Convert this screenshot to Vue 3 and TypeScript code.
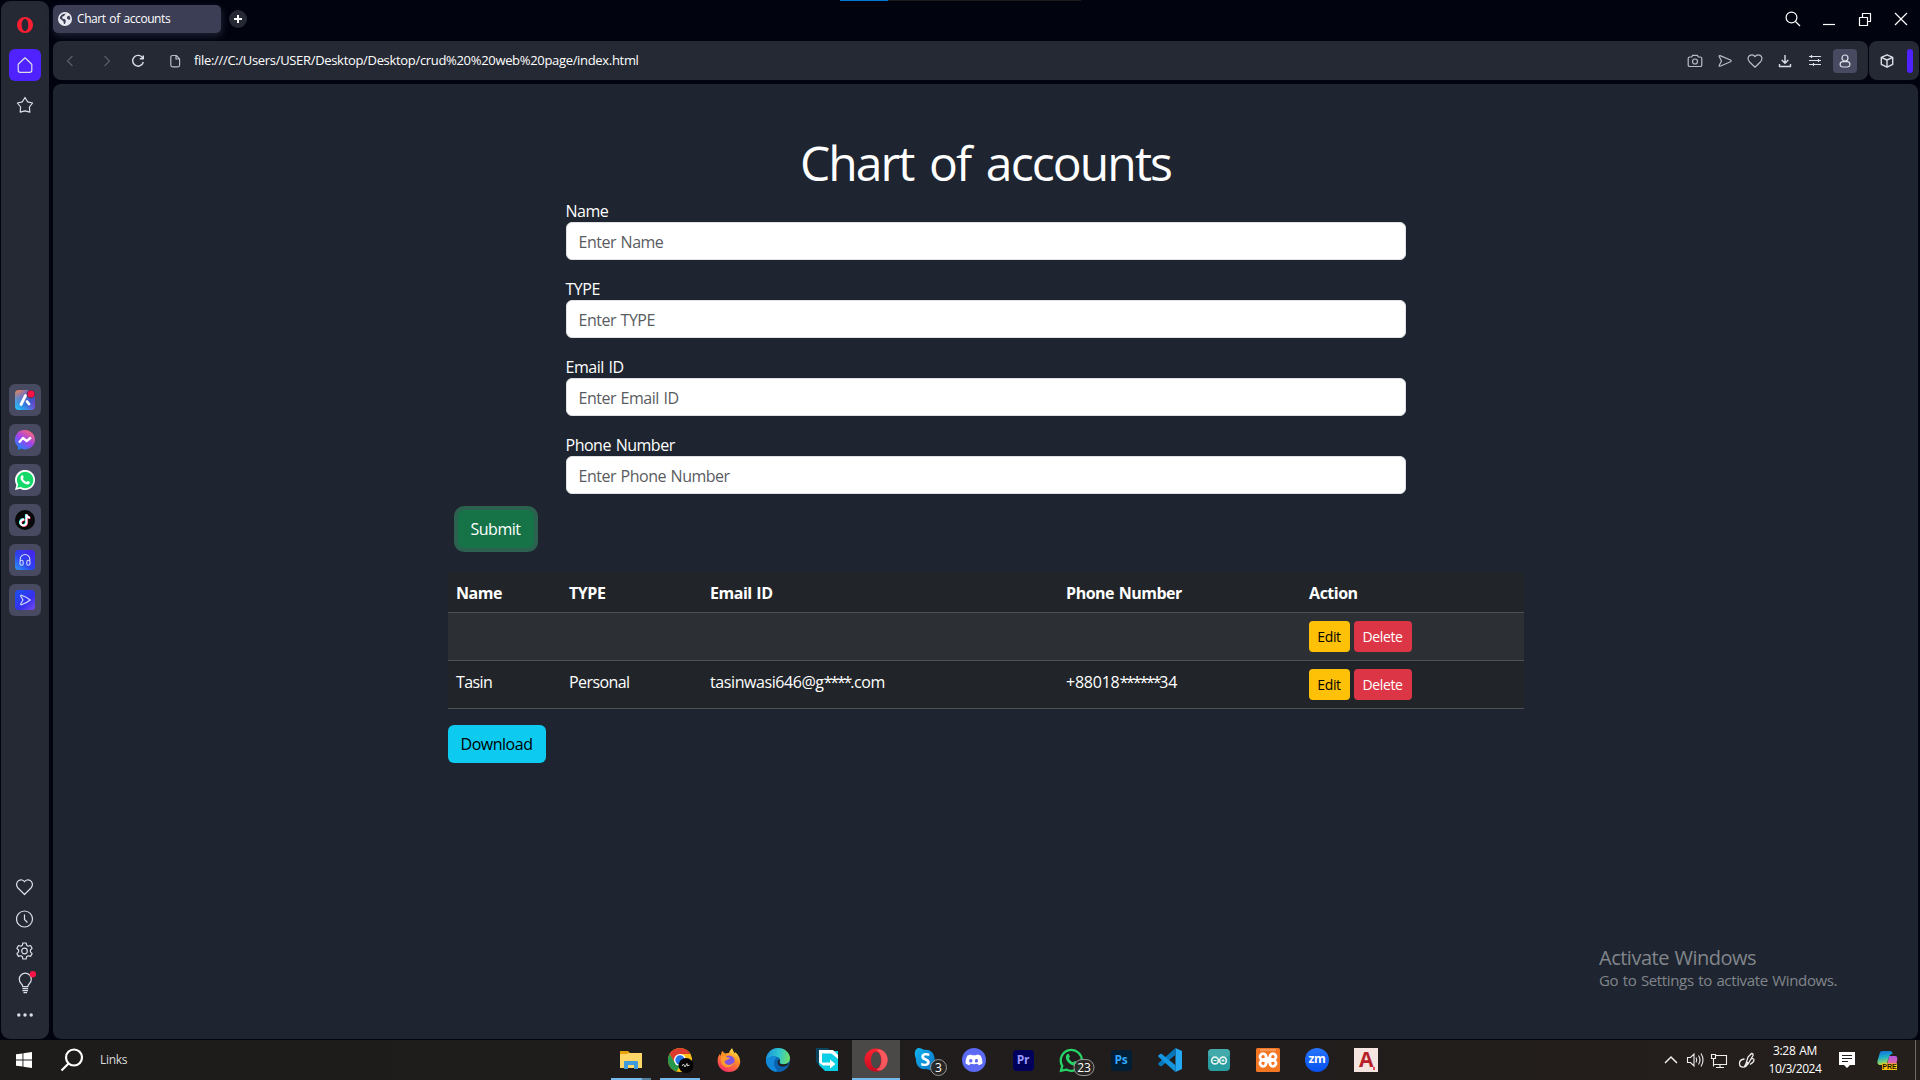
<script setup lang="ts">
import { reactive, ref } from 'vue'

interface Field { id: string; label: string }
interface Account { name: string; type: string; mail: string[]; phone: string[] }

const fields: Field[] = [
  { id: 'name', label: 'Name' },
  { id: 'type', label: 'TYPE' },
  { id: 'email', label: 'Email ID' },
  { id: 'phone', label: 'Phone Number' },
]
const form = reactive<Record<string, string>>({ name: '', type: '', email: '', phone: '' })
const columns: string[] = ['Name', 'TYPE', 'Email ID', 'Phone Number', 'Action']
const accounts = ref<Account[]>([
  { name: '', type: '', mail: ['', '', ''], phone: ['', '', ''] },
  { name: 'Tasin', type: 'Personal', mail: ['tasinwasi646@g', '****', '.com'], phone: ['+88018', '******', '34'] },
])
function remove(index: number) {
  accounts.value.splice(index, 1)
}
</script>

<template>
  <div class="desktop">
    <div class="browser">
      <div class="screen-accent"><i></i></div>

      <aside class="sidebar">
        <div class="cell">
          <svg width="18" height="18" viewBox="0 0 18 18"><path fill="#fa1e32" fill-rule="evenodd" d="M9 1a8 8 0 1 0 0 16A8 8 0 0 0 9 1Zm0 2c2 0 3.300 2.600 3.300 6S11 15 9 15s-3.300-2.600-3.300-6S7 3 9 3Z" /></svg>
        </div>
        <div class="cell home">
          <svg width="18" height="18" viewBox="0 0 18 18" class="ln"><path d="M2.200 8.200 9 1.800l6.800 6.400M2.200 8v6.300q0 2 2 2h9.600q2 0 2-2V8" /></svg>
        </div>
        <div class="cell">
          <svg width="18" height="18" viewBox="0 0 18 18" class="ln"><path d="m9 1.500 2.600 4.300 5 1.200-3.200 4 .4 5.200L9 14.900l-4.800 1.300.4-5.200-3.200-4 5-1.200Z" /></svg>
        </div>

        <div class="apps">
          <div class="cell app">
            <svg width="20" height="20" viewBox="0 0 20 20"><defs><linearGradient id="aria" x1="0" y1="0" x2=".9" y2="1"><stop offset="0" stop-color="#ff8a4c" /><stop offset=".35" stop-color="#7d6fb5" /><stop offset=".65" stop-color="#3757c8" /><stop offset="1" stop-color="#8b35c8" /></linearGradient><linearGradient id="ariaTeal" y1=".3" y2="1" x1=".5" x2="0"><stop offset="0" stop-color="#25a0ff" stop-opacity="0" /><stop offset="1" stop-color="#25d3ff" /></linearGradient></defs><rect width="20" height="20" rx="4" fill="url(#aria)" /><rect width="20" height="20" rx="4" fill="url(#ariaTeal)" /><path d="m10.500 5.500-4.500 9M12 11.500l2 2.500" stroke="#fff" stroke-width="2.800" stroke-linecap="round" /><circle cx="16" cy="4" r="4.300" fill="#3d2c4c" /><circle cx="16" cy="4" r="3.500" fill="#fa1345" /></svg>
          </div>
          <div class="cell app">
            <svg width="20" height="20" viewBox="0 0 20 20"><defs><linearGradient id="mess" x1=".15" y1="1" x2=".8" y2="0"><stop offset="0" stop-color="#0a8dff" /><stop offset=".5" stop-color="#a042ed" /><stop offset="1" stop-color="#ff6b70" /></linearGradient></defs><path fill="url(#mess)" d="M10 0a10 9.700 0 1 1-4 18.600L3 20v-3.200A9.700 9.700 0 0 1 10 0Z" /><path d="m4 12.500 4-4.500 3.700 3L16 7.500" fill="none" stroke="#fff" stroke-width="2.300" stroke-linejoin="round" /></svg>
          </div>
          <div class="cell app">
            <svg width="20" height="20" viewBox="0 0 20 20"><path fill="#fff" d="m0 20 1.400-5A10 10 0 1 1 5.200 18.700Z" /><path fill="#13d86a" d="m2.200 17.800 1-3.400a8.200 8.200 0 1 1 2.600 2.600Z" /><path fill="#fff" d="M6.800 5.300c.5-.3 1-.1 1.200.3l.7 1.700c.1.400-.8 1.200-.7 1.500.7 1.500 1.700 2.400 3.300 3.100.4.100 1.100-1.100 1.500-1l1.800.9c.4.200.2 1.300-.1 1.700-1 1.300-2.600 1.200-4.200.5-2.400-1-4-3-4.600-4.700-.5-1.500-.1-3.200 1.100-4Z" /></svg>
          </div>
          <div class="cell app">
            <svg width="20" height="20" viewBox="0 0 20 20"><circle cx="10" cy="10" r="10" fill="#060708" /><g fill="none" stroke-width="2"><path stroke="#25f4ee" d="M8.600 9.200a3 3 0 1 0 2.300 3V4.200c.4 2 1.700 3 3.600 3.200" /><path stroke="#fe2c55" d="M9.800 10.200a3 3 0 1 0 2.300 3V5c.4 2 1.700 3 3.400 3.200" /><path stroke="#fff" d="M9.200 9.700a3 3 0 1 0 2.300 3V4.500c.4 2 1.700 3 3.500 3.200" /></g></svg>
          </div>
          <div class="cell app">
            <svg width="20" height="20" viewBox="0 0 20 20"><defs><linearGradient id="blue" x1="0" y1="1" x2=".9" y2="0"><stop offset="0" stop-color="#2e9af5" /><stop offset=".45" stop-color="#2d43f0" /><stop offset="1" stop-color="#4921ee" /></linearGradient></defs><rect width="20" height="20" rx="3.500" fill="url(#blue)" /><g fill="none" stroke="#d6d9ff" stroke-width="1.100"><path d="M5.200 11V9.300a4.800 4.800 0 0 1 9.600 0V11" /><rect x="5" y="10.300" width="3.200" height="5" rx="1.600" /><rect x="11.800" y="10.300" width="3.200" height="5" rx="1.600" /></g></svg>
          </div>
          <div class="cell app">
            <svg width="20" height="20" viewBox="0 0 20 20"><defs><linearGradient id="violet" x1="0" y1="0" x2="1" y2="1"><stop offset="0" stop-color="#1c50f0" /><stop offset=".6" stop-color="#3730ee" /><stop offset="1" stop-color="#7b4bf2" /></linearGradient></defs><rect width="20" height="20" rx="3.500" fill="url(#violet)" /><path d="M6.500 5.200c2.800 1 6 2.600 8.700 4.800-2.700 2.200-5.900 3.800-8.700 4.800-.8.200-1-.5-.6-1.200L8 10 5.900 6.400c-.4-.7-.2-1.400.6-1.200Z" fill="none" stroke="#d6d9ff" stroke-width="1.100" /></svg>
          </div>
        </div>

        <div class="cell"><svg width="18" height="18" viewBox="0 0 18 18" class="ln"><path d="M8.500 16.500 2 10C-.6 7 .8 3.700 2.800 2.500c2-1.200 4.600-.6 5.700 1.300 1.100-1.900 3.700-2.500 5.700-1.300 2 1.200 3.400 4.500.8 7.500Z" /></svg></div>
        <div class="cell"><svg width="18" height="18" viewBox="0 0 18 18" class="ln"><circle cx="8.500" cy="9" r="8" /><path d="M8.500 4.500v5l3 3" /></svg></div>
        <div class="cell"><svg width="18" height="18" viewBox="0 0 18 18" class="ln"><path d="M6.900 1h3.200l.6 2.300 1.500.9 2.300-.7 1.600 2.800-1.700 1.700v1.900l1.700 1.700-1.600 2.800-2.300-.7-1.500.9-.6 2.400H6.900l-.6-2.400-1.500-.9-2.300.7-1.600-2.800 1.700-1.700V8L.9 6.300l1.600-2.800 2.300.7 1.500-.9Z" /><circle cx="8.500" cy="9" r="2.800" /></svg></div>
        <div class="cell"><svg width="22" height="24" viewBox="0 0 22 24" class="ln"><path d="M8.800 15.700c0-1.500-.4-2-1.700-3.200a6 6 0 1 1 8.400 0c-1.300 1.200-1.700 1.700-1.700 3.200Z" /><path d="M8.500 17.700h5.600M8.500 19.700h5.600M9.500 21.700h3.600" /><circle cx="18.900" cy="3.300" r="3.200" fill="#fa1345" stroke="none" /></svg></div>
        <div class="cell"><svg width="18" height="18" viewBox="0 0 18 18" fill="#dcdfe6"><circle cx="2.800" cy="9" r="1.700" /><circle cx="9" cy="9" r="1.700" /><circle cx="15.200" cy="9" r="1.700" /></svg></div>
      </aside>

      <div class="main">
        <header class="tabbar">
          <div class="tab">
            <svg width="14" height="14" viewBox="0 0 14 14"><circle cx="7" cy="7" r="7" fill="#e8e9f0" /><path fill="#3b3e54" d="M7.700 1.800 6 4l-1.800.7.300 2 2.700.5.7 2-1 2.800h-1l-.4-2.500L2.600 7l-.9-.8a5.500 5.500 0 0 1 6-4.400ZM9 4.800l2.300-1.300a5.600 5.600 0 0 1 1 4l-1.500.2L9 6.500Z" /></svg>
            <span>Chart of accounts</span>
          </div>
          <div class="plus"><svg width="18" height="18" viewBox="0 0 18 18"><path d="M9 5v8M5 9h8" stroke="#fff" stroke-width="2" /></svg></div>
          <div class="window-controls">
            <svg width="18" height="18" viewBox="0 0 18 18" class="ln"><circle cx="7.500" cy="7.500" r="5.400" /><path d="m11.500 11.500 4.500 4.500" /></svg>
            <svg width="18" height="18" viewBox="0 0 18 18" class="ln"><path d="M3 14.500h12" /></svg>
            <svg width="18" height="18" viewBox="0 0 18 18" class="ln"><path d="M3.500 7.500h8v8h-8ZM6.500 7.500v-4h8v8h-3" /></svg>
            <svg width="18" height="18" viewBox="0 0 18 18" class="ln"><path d="m3 3 12 12M15 3 3 15" /></svg>
          </div>
        </header>

        <div class="toolbars">
          <div class="addressbar">
            <svg class="dim back" width="18" height="18" viewBox="0 0 18 18"><path d="m11.500 4-5 5 5 5" /></svg>
            <svg class="dim fwd" width="18" height="18" viewBox="0 0 18 18"><path d="m6.500 4 5 5-5 5" /></svg>
            <svg class="ln reload" width="18" height="18" viewBox="0 0 18 18"><path d="M13.800 6.200A5.400 5.400 0 1 0 14.300 10M14.300 3.500v3.300h-3.500" stroke-width="1.400" /></svg>
            <svg class="ln soft doc" width="14" height="14" viewBox="0 0 14 14"><path d="M4.500 1.500h3.800l3.300 3.300v6.200q0 1.800-1.800 1.800H4.500q-1.700 0-1.700-1.800V3.200q0-1.700 1.700-1.700ZM8 1.700v3.300h3.400" /></svg>
            <span class="url">file:///C:/Users/USER/Desktop/Desktop/crud%20%20web%20page/index.html</span>
            <div class="actions">
              <svg class="ln soft" width="18" height="18" viewBox="0 0 18 18"><path d="M3.800 5h1.900l.9-1.700h4.800l.9 1.700h1.900q1.600 0 1.600 1.600v6.300q0 1.600-1.600 1.600H3.800q-1.600 0-1.600-1.600V6.600Q2.200 5 3.800 5Z" /><circle cx="9" cy="9.500" r="2.500" /></svg>
              <svg class="ln soft" width="18" height="18" viewBox="0 0 18 18"><path d="M4 3.600 14.500 8q1.300.8 0 1.700L4 14.200q-1.300.3-.7-1L5.500 9 3.300 4.700q-.6-1.300.7-1.100Z" /></svg>
              <svg class="ln soft" width="18" height="18" viewBox="0 0 18 18"><path d="M9 15.200 3.400 9.700C1 7 2.200 4.300 3.900 3.400c1.800-.9 4-.4 5.100 1.300 1.100-1.700 3.300-2.200 5.100-1.300 1.700.9 2.900 3.600.5 6.300Z" /></svg>
              <svg class="ln" width="18" height="18" viewBox="0 0 18 18"><path d="M9 3v8M5.700 8 9 11.200 12.300 8M3.500 12v2.500h11V12" stroke-width="1.400" /></svg>
              <svg class="ln" width="18" height="18" viewBox="0 0 18 18"><path d="M3 4.500h12M3 8.500h12M3 12.500h12M5.500 3v3M12.500 7v3M7.500 11v3" /></svg>
              <div class="profile"><svg class="ln" width="18" height="18" viewBox="0 0 18 18"><circle cx="9" cy="6" r="3" /><path d="M6.300 9.700h5.400a2.700 2.700 0 0 1 0 5.300H6.300a2.700 2.700 0 0 1 0-5.300Z" /></svg></div>
            </div>
          </div>
          <div class="sidepanel">
            <svg class="ln" width="16" height="16" viewBox="0 0 16 16"><path d="m8 1.800 5.700 2.500v7L8 14.200l-5.700-2.900v-7ZM2.300 4.300 8 7l5.700-2.700M8 7v7.200" stroke-width="1.400" /></svg>
            <i></i>
          </div>
        </div>

        <main class="page">
          <div class="container">
            <h1>Chart of accounts</h1>
            <form @submit.prevent>
              <div v-for="f in fields" :key="f.id" class="field">
                <label :for="f.id">{{ f.label }}</label>
                <input :id="f.id" v-model="form[f.id]" type="text" :placeholder="'Enter ' + f.label" autocomplete="off">
              </div>
              <button type="submit" class="btn submit">Submit</button>
            </form>

            <table>
              <colgroup><col class="c1"><col class="c2"><col class="c3"><col class="c4"><col class="c5"></colgroup>
              <thead><tr><th v-for="c in columns" :key="c">{{ c }}</th></tr></thead>
              <tbody>
                <tr v-for="(a, i) in accounts" :key="i">
                  <td>{{ a.name }}</td>
                  <td>{{ a.type }}</td>
                  <td class="mail">{{ a.mail[0] }}<span class="mask">{{ a.mail[1] }}</span>{{ a.mail[2] }}</td>
                  <td class="phone">{{ a.phone[0] }}<span class="mask">{{ a.phone[1] }}</span>{{ a.phone[2] }}</td>
                  <td><div class="row-actions"><button class="btn sm edit" type="button">Edit</button><button class="btn sm delete" type="button" @click="remove(i)">Delete</button></div></td>
                </tr>
              </tbody>
            </table>
            <button type="button" class="btn download">Download</button>
          </div>
          <div class="watermark"><p>Activate Windows</p><small>Go to Settings to activate Windows.</small></div>
        </main>
      </div>
    </div>

    <footer class="taskbar">
      <div class="start"><svg width="16" height="16" viewBox="0 0 16 16" fill="#fff"><path d="M0 2.300 6.500 1.400v6H0ZM7.400 1.200 16 0v7.400H7.400ZM0 8.400h6.500v6.200L0 13.700ZM7.400 8.400H16V16l-8.600-1.200Z" /></svg></div>
      <div class="start"><svg width="24" height="24" viewBox="0 0 24 24" fill="none" stroke="#fff" stroke-width="2.200"><circle cx="14" cy="9.500" r="8" /><path d="m8.500 15.500-7 7" /></svg></div>
      <span class="links">Links</span>

      <div class="pinned">
        <div class="task explorer"><svg width="24" height="24" viewBox="0 0 24 24"><path fill="#e8a30c" d="M1 3h8l2 2h12v5H1Z" /><path fill="#ffd768" d="M1 6h7l2-1h13v15H1Z" /><path fill="#3f9bdc" d="M5 21v-7q0-1 1-1h12q1 0 1 1v7h-4v-4H9v4Z" /></svg></div>
        <div class="task chrome"><svg width="26" height="26" viewBox="0 0 26 26"><circle cx="12" cy="13" r="12" fill="#fbc116" /><path fill="#dd3b2f" d="M1.600 7a12 12 0 0 1 20.800 0H12L7 16Z" /><path fill="#26974c" d="M1.600 7 7 16l5 2.500L8.500 24.500A12 12 0 0 1 1.600 7Z" /><circle cx="12" cy="13" r="6" fill="#fff" /><circle cx="12" cy="13" r="4.700" fill="#2676e4" /><circle cx="18" cy="18.500" r="7.500" fill="#050505" /><path d="m14 19 1.500-2 1.500 3 2-3.500.5 2.500 2-1" fill="none" stroke="#ccc" stroke-width="1" /></svg></div>
        <div class="task"><svg width="24" height="24" viewBox="0 0 24 24"><defs><linearGradient id="ff" x1=".8" y1="0" x2=".3" y2="1"><stop offset="0" stop-color="#fff14a" /><stop offset=".45" stop-color="#ff8b26" /><stop offset="1" stop-color="#f72d66" /></linearGradient></defs><path fill="url(#ff)" d="M5 3l3 2.500 4-.5c.5-2 2-3.500 3-5l2 4.500 1 .8V4c4 3 5.800 7.400 5 11.500C22 20.500 17.500 24 12 24 5 24-.5 18 .8 10.500 1.200 8.500 2 7 3 6L3.500 8Z" /><circle cx="12" cy="13" r="5.600" fill="#8154df" /><path fill="#ff9b2c" d="M4.500 8c3-.8 5 .2 5.500 1.500 1.500-.3 2.700.3 3 1-2 .5-2.800 1.500-4.500 2-1.500.5-1 2.500.5 3.500 3 2 6 .5 8-2-1 5-7 7-11 3.500C3.500 15 3.200 11 4.500 8Z" /></svg></div>
        <div class="task"><svg width="24" height="24" viewBox="0 0 24 24"><defs><linearGradient id="edge" x1="0" y1=".3" x2="1" y2=".4"><stop offset="0" stop-color="#1b95dc" /><stop offset=".55" stop-color="#2ec7cf" /><stop offset="1" stop-color="#70df67" /></linearGradient></defs><circle cx="12" cy="12" r="12" fill="#0b61ae" /><path fill="url(#edge)" d="M0 11C1 4.500 6 0 12 0c7 0 12 5 12 10.300 0 3.600-3 6-6.400 6-2.700 0-4.500-1-4.100-2.300 1.600-2.600-.6-5.500-4.300-5.600C5 8.200 1.500 10 0 14Z" /><path fill="#1288d8" d="M0 11.500c2-2.400 6-3.800 9-3 1.400.5 2 1 2.200 1.600-4 1.700-4.400 7.900.1 12.400-.5.600-1.500 1.300-2.800 1.100C3.500 22-.5 17 0 11.500Z" /><path fill="#201d1c" d="M13.500 14c-.4 1.400 1.400 2.300 4.100 2.300 2 0 3.400-.6 4.600-1.400l.3 1.500-3 1.700c-4 1.500-7.800-.5-7.800-3.600 0-2 .9-2.800 2-3.100.4.800.3 1.800-.2 2.600Z" /></svg></div>
        <div class="task"><svg width="24" height="24" viewBox="0 0 24 24"><path fill="#0b435e" d="M1 0h12l2 2v16H5l-4-4Z" /><path fill="#0bcde3" d="M4 3h19v20H10l-6-6Z" /><path fill="#fff" d="M4 2h14l5 5v4l-4-3.500-3-2H7v9h8v-3l5.500 4.500-5.500 4.500v-3H8l-4-3Z" /></svg></div>
        <div class="task active"><svg width="24" height="24" viewBox="0 0 24 24"><defs><linearGradient id="op" y2="1" x2="0"><stop offset="0" stop-color="#ff2331" /><stop offset="1" stop-color="#c60b20" /></linearGradient></defs><path fill="url(#op)" fill-rule="evenodd" d="M12 .5a11.500 11.500 0 1 0 0 23 11.500 11.500 0 0 0 0-23ZM12 3.700c3 0 5 3.700 5 8.300s-2 8.300-5 8.300-5-3.700-5-8.300 2-8.300 5-8.300Z" /><path fill="#ff6d70" opacity=".75" d="M12 2.500c3-2.100 6-.8 8 1.100a11.500 11.500 0 0 1 0 16.800c-2 1.900-5 3.200-8 1.100 3-.2 5.400-4 5.400-9.500S15 2.700 12 2.500Z" /></svg></div>
        <div class="task"><svg class="badge-icon" width="34" height="29" viewBox="0 0 34 29"><defs><linearGradient id="sky" y2="1" x2="1"><stop offset="0" stop-color="#13b3ed" /><stop offset="1" stop-color="#0873c7" /></linearGradient></defs><path fill="url(#sky)" d="M5 0C7 0 9 1 10 2c5-1 10 2 10.500 8l.7 4c2.300 6-4 10-8.700 7C5.700 22 1.700 17 2 11-.5 6 1 0 5 0Z" /><text x="11" y="18" text-anchor="middle" class="skype">S</text><circle cx="24.500" cy="19.500" r="8" fill="#292725" fill-opacity=".93" stroke="#999" /><text x="24.500" y="23.700" text-anchor="middle" class="count">3</text></svg></div>
        <div class="task"><svg width="24" height="24" viewBox="0 0 24 24"><circle cx="12" cy="12" r="12" fill="#5b69f3" /><path fill="#fff" fill-rule="evenodd" d="M8.700 6.500 10 7.300h4l1.300-.8c1.300.2 2.400.6 3.200 1 1.400 2.300 2.100 5.300 1.900 8-1 .9-2.300 1.500-3.700 1.700l-1.100-1.500c-2.200.6-5 .6-7.200 0l-1.100 1.500a8 8 0 0 1-3.700-1.700c-.2-2.700.5-5.700 1.900-8a11 11 0 0 1 3.200-1Zm.5 4.500a1.600 1.800 0 1 0 0 3.500 1.600 1.800 0 0 0 0-3.500Zm5.600 0a1.600 1.800 0 1 0 0 3.500 1.600 1.800 0 0 0 0-3.500Z" /></svg></div>
        <div class="task"><span class="tile pr">Pr</span></div>
        <div class="task"><svg class="badge-icon wa" width="38" height="29" viewBox="0 0 38 29"><path fill="none" stroke="#25d366" stroke-width="2.300" d="m2 22.800 1.300-5a10.500 10.500 0 1 1 4 3.800Z" /><path fill="#25d366" d="M8.400 6c.6-.4 1.400-.1 1.600.4l.9 2.100c.1.500-1 1.500-.9 1.900.9 1.900 2.100 3 4.100 3.800.5.200 1.400-1.300 1.900-1.200l2.200 1.100c.5.300.3 1.700-.1 2.200-1.300 1.600-3.300 1.500-5.300.6-3-1.300-5-3.700-5.700-5.900C6.500 9.200 6.900 7 8.400 6Z" /><rect x="15" y="11.500" width="20" height="16" rx="8" fill="#292725" fill-opacity=".93" stroke="#999" /><text x="25" y="23.700" text-anchor="middle" class="count">23</text></svg></div>
        <div class="task"><span class="tile ps">Ps</span></div>
        <div class="task"><svg width="24" height="24" viewBox="0 0 24 24"><path fill="#24a8f2" d="M17.500 0 24 3v18l-6.500 3Z" /><path fill="#0878bd" d="M17.500 0v6.700L3.200 18.500.3 16.800v-1.600Z" /><path fill="#1597e0" d="M17.500 24v-6.700L3.200 5.500.3 7.200v1.600Z" /></svg></div>
        <div class="task"><svg width="22" height="22" viewBox="0 0 22 22"><rect width="22" height="22" rx="4" fill="#2a9da0" /><rect width="22" height="8" rx="4" fill="#53b3b2" opacity=".6" /><g fill="none" stroke="#e4f3ed" stroke-width="1.700"><circle cx="7" cy="11.500" r="3.400" /><circle cx="15" cy="11.500" r="3.400" /></g><path d="M5.500 11.500h3M13.500 11.500h3M15 10v3" stroke="#e4f3ed" /></svg></div>
        <div class="task"><svg width="24" height="24" viewBox="0 0 24 24"><rect width="24" height="24" rx="1.500" fill="#f37623" /><path d="M4 2h16" stroke="#f9b88a" /><g fill="none" stroke="#fff" stroke-width="2.800"><path d="M12 11.200H8.700A3 3 0 1 1 10 8.300q0 2 2 2t2-2a3 3 0 1 1 1.300 2.900H12Z" /><path d="M12 12.800H8.700A3 3 0 1 0 10 15.700q0-2 2-2t2 2a3 3 0 1 0 1.300-2.900H12Z" /></g></svg></div>
        <div class="task"><span class="zoom-app">zm</span></div>
        <div class="task"><span class="acad">A<i></i></span></div>
      </div>

      <div class="tray">
        <svg class="t24" viewBox="0 0 24 24"><path d="m6 15 6-6 6 6" stroke-width="1.500" /></svg>
        <svg class="t24" viewBox="0 0 24 24"><path d="M4.500 9.500h3l3.500-3.500v12l-3.500-3.500h-3ZM13 9.500q1.500 2.500 0 5M15.500 7.500q3 4.500 0 9M18 5.500q4 6.500 0 13" /></svg>
        <svg class="t24" viewBox="0 0 24 24"><path d="M8.500 7.500h11v9h-13v-5M13 16.500v3M9 19.500h8M4.500 6.500h4v4h-4ZM6.500 10.500v8" /></svg>
        <svg class="t32" viewBox="0 0 32 24"><path d="M15 15.500 17 9l3.500-3.500q2 0 1.500 2L17 16l-3.500 2.500ZM13.500 11q-5 .5-5 4.500t4.500 3.500q4-1 3.500-5M20 11q3-1 3 1t-4 4.500" stroke-width="1.300" /></svg>
        <div class="clock"><span>3:28 AM</span><span class="date">10/3/2024</span></div>
        <svg class="t40" viewBox="0 0 40 24"><path fill="#fff" stroke="none" d="M12 4h16v13h-5l-3 3-3-3h-5Z" /><path d="M15 7.500h10M15 10.500h10M15 13.500h6" stroke="#231f1c" /></svg>
        <svg class="t40" viewBox="0 0 40 24"><defs><linearGradient id="cpa" y2="1" x2=".2"><stop offset="0" stop-color="#1567dd" /><stop offset=".5" stop-color="#1bb0ca" /><stop offset="1" stop-color="#b2db46" /></linearGradient><linearGradient id="cpb" y2="1" x2="0"><stop offset="0" stop-color="#b257e4" /><stop offset="1" stop-color="#ff7178" /></linearGradient></defs><path fill="url(#cpb)" stroke="none" d="M22 8h6q2.500 0 2.300 3l-1 6q-.6 3-4 3h-6Z" /><path fill="url(#cpa)" stroke="none" d="M15 3h8q2.500 0 2.500 3-3 0-4 4l-2 7h-7q-2.500-.5-2-4l2-7q.5-3 2.500-3Z" /><rect x="15" y="15.500" width="15" height="6.500" fill="#ffc20e" stroke="none" /><text x="22.500" y="21.300" text-anchor="middle" class="pre">PRE</text></svg>
        <i class="peek"></i>
      </div>
    </footer>
  </div>
</template>

<style>
body { background: #01030f; overflow: hidden; }
</style>

<style scoped>
* { box-sizing: border-box; }
.desktop { width: 1920px; height: 1080px; display: flex; flex-direction: column; background: #01030f; color: #fff; font-family: "Open Sans", "Noto Sans", sans-serif; font-size: 16px; line-height: 24px; letter-spacing: -.48px; word-spacing: 1px; }
svg { display: block; flex: none; }
.ln { fill: none; stroke: #dcdfe6; stroke-width: 1.200; stroke-linejoin: round; }
.soft { stroke: #b9bdc6; }
.browser { position: relative; height: 1040px; display: flex; padding: 1px; }
.screen-accent { position: absolute; left: 840px; top: 0; width: 241px; height: 1px; background: #1c1b1a; }
.screen-accent i { display: block; width: 48px; height: 1px; background: #0078d7; }

.sidebar { width: 48px; height: 1038px; background: #252934; border-radius: 9px; padding: 8px 0; display: flex; flex-direction: column; align-items: center; }
.cell { width: 32px; height: 32px; display: grid; place-items: center; border-radius: 6px; flex: none; }
.home { background: #4f22ff; margin: 8px 0; }
.apps { display: flex; flex-direction: column; gap: 8px; margin-top: 263px; margin-bottom: auto; }
.app { background: #474a60; }

.main { flex: 1; min-width: 0; margin-left: 4px; display: flex; flex-direction: column; }
.tabbar { height: 40px; display: flex; align-items: flex-start; padding-top: 4px; }
.tab { width: 168px; height: 28px; background: #3b3e54; border-radius: 5px; display: flex; align-items: center; gap: 5px; padding-left: 5px; font-size: 12px; line-height: 26px; letter-spacing: -.42px; word-spacing: 1px; box-shadow: 1px 3px 7px #3b3e5488; }
.plus { width: 18px; height: 18px; border-radius: 50%; background: #252934; margin: 5px 0 0 8px; }
.window-controls { margin: 5px 9px 0 auto; display: flex; gap: 18px; }
.window-controls .ln { stroke: #fff; }
.toolbars { display: flex; gap: 1px; height: 39px; }
.addressbar { width: 1815px; background: #252934; border-radius: 8px; display: flex; align-items: center; }
.dim { fill: none; stroke: #5a5e69; stroke-width: 1.200; }
.back { margin-left: 8px; }
.fwd { margin-left: 19px; }
.reload { margin-left: 13px; }
.doc { margin-left: 21px; }
.url { margin: -2px 0 0 12px; font-size: 13px; letter-spacing: -.32px; }
.actions { margin-left: auto; margin-right: 11px; display: flex; align-items: center; gap: 12px; }
.profile { width: 24px; height: 24px; border-radius: 4px; background: #474a60; display: grid; place-items: center; margin-left: -3px; }
.sidepanel { width: 50px; background: #252934; border-radius: 8px; display: flex; align-items: center; padding-left: 10px; }
.sidepanel i { width: 6px; height: 24px; border-radius: 3px; background: #4f22ff; margin-left: 12px; }

.page { position: relative; width: 1865px; height: 955px; margin-top: 4px; border-radius: 8px; background: #1e2530; overflow: hidden; }
.container { width: 1076px; margin: 0 auto; padding-top: 50px; }
h1 { margin: 0 0 7px; height: 57px; font-size: 48px; line-height: 57px; font-weight: 400; text-align: center; letter-spacing: -1.900px; word-spacing: 5px; }
form { height: 382px; }
.field { width: 840px; margin: 0 auto 16px; }
label { display: block; height: 24px; padding-top: 1px; }
input { display: block; width: 100%; height: 38px; padding: 7px 12px 5px; border: 1px solid #dee2e6; border-radius: 6px; background: #fff; color: #212529; font: inherit; letter-spacing: -.5px; word-spacing: 1px; outline: none; }
input::placeholder { color: #595c5f; opacity: 1; }
.btn { display: block; height: 38px; padding: 0; border: 0; border-radius: 6px; font: inherit; letter-spacing: inherit; color: #fff; text-align: center; }
.submit { width: 76px; margin: 0 0 0 10px; background: #157347; box-shadow: 0 0 0 4px #2c6150; }
table { width: 1076px; table-layout: fixed; border-collapse: separate; border-spacing: 0; margin: -8px 0 16px; background: #212529; }
.c1 { width: 113px; } .c2 { width: 141px; } .c3 { width: 356px; } .c4 { width: 243px; } .c5 { width: 223px; }
th, td { padding: 9px 8px 7px; border-bottom: 1px solid #4d5154; text-align: left; vertical-align: top; height: 48px; text-indent: .6px; letter-spacing: -.6px; }
th { height: 41px; font-weight: 700; letter-spacing: -.5px; }
tbody tr:nth-child(odd) { background: #2c3034; }
td.mail { letter-spacing: -.43px; }
td.phone { letter-spacing: -.26px; }
.mask { letter-spacing: -2.160px; }
.row-actions { display: flex; gap: 4px; margin-top: -1px; text-indent: 0; }
.sm { height: 31px; font-size: 14px; line-height: 31px; border-radius: 4px; letter-spacing: -.35px; }
.edit { width: 41px; background: #ffc107; color: #000; }
.delete { width: 58px; background: #dc3545; }
.download { width: 98px; background: #0dcaf0; color: #000; }
.watermark { position: absolute; left: 1546px; top: 861px; color: #82868b; }
.watermark p { margin: 0; font-size: 20px; line-height: 26px; letter-spacing: -.5px; word-spacing: 1px; }
.watermark small { display: block; font-size: 15px; line-height: 20px; letter-spacing: -.36px; margin-top: -1px; }

.taskbar { height: 40px; background: linear-gradient(90deg, #1e1c1b, #201d1c 60%, #251f1c); display: flex; align-items: stretch; }
.start { width: 48px; display: grid; place-items: center; }
.links { margin-left: 4px; width: 40px; font-size: 12px; line-height: 40px; letter-spacing: -.3px; color: #dcdcdc; }
.pinned { display: flex; gap: 1px; margin-left: 467px; }
.task { position: relative; width: 48px; display: grid; place-items: center; }
.task::after { content: ""; position: absolute; bottom: 0; height: 2px; background: #76b9ed; }
.explorer::after { left: 4px; width: 40px; background: linear-gradient(90deg, #76b9ed 31px, #557d9c 31px); }
.chrome::after { left: 4px; width: 40px; }
.chrome svg { margin-left: 2px; }
.active { background: #4b4948; }
.active::after { left: 0; width: 48px; }
.badge-icon { margin: 4px 0 0 12px; }
.wa { margin: 4px 0 0 11px; }
.skype { font: 700 18px "Open Sans", sans-serif; fill: #fff; }
.count { font: 12px "Open Sans", sans-serif; fill: #fff; letter-spacing: 0; }
.tile { width: 21px; height: 21px; border-radius: 4px; font-size: 12px; font-weight: 700; line-height: 20px; text-align: center; letter-spacing: -.3px; }
.pr { background: #00005b; color: #9999ff; }
.ps { background: #001e36; color: #31a8ff; }
.zoom-app { width: 24px; height: 24px; border-radius: 50%; background: linear-gradient(#2674ff, #0750ec); font-size: 12px; font-weight: 700; line-height: 21px; text-align: center; letter-spacing: -.4px; }
.acad { position: relative; width: 24px; height: 24px; background: #f5e4df; color: #b71f29; font: 700 21px/22px "Open Sans", sans-serif; text-align: center; }
.acad i { position: absolute; right: 3px; bottom: 2px; width: 2px; height: 3px; background: #e44a50; }
.tray { margin-left: auto; display: flex; align-items: center; }
.tray svg { height: 24px; fill: none; stroke: #eee; stroke-width: 1.100; }
.t24 { width: 24px; } .t32 { width: 32px; } .t40 { width: 40px; }
.clock { width: 64px; height: 36px; display: flex; flex-direction: column; align-items: center; font-size: 12px; line-height: 18px; letter-spacing: -.3px; margin-top: -1px; }
.date { letter-spacing: -.45px; }
.tray .pre { font: 700 7px "Liberation Sans", sans-serif; fill: #1b1500; stroke: none; letter-spacing: 0; }
.peek { width: 5px; height: 40px; margin-left: 8px; border-left: 1px solid #6f6a68; }
</style>
